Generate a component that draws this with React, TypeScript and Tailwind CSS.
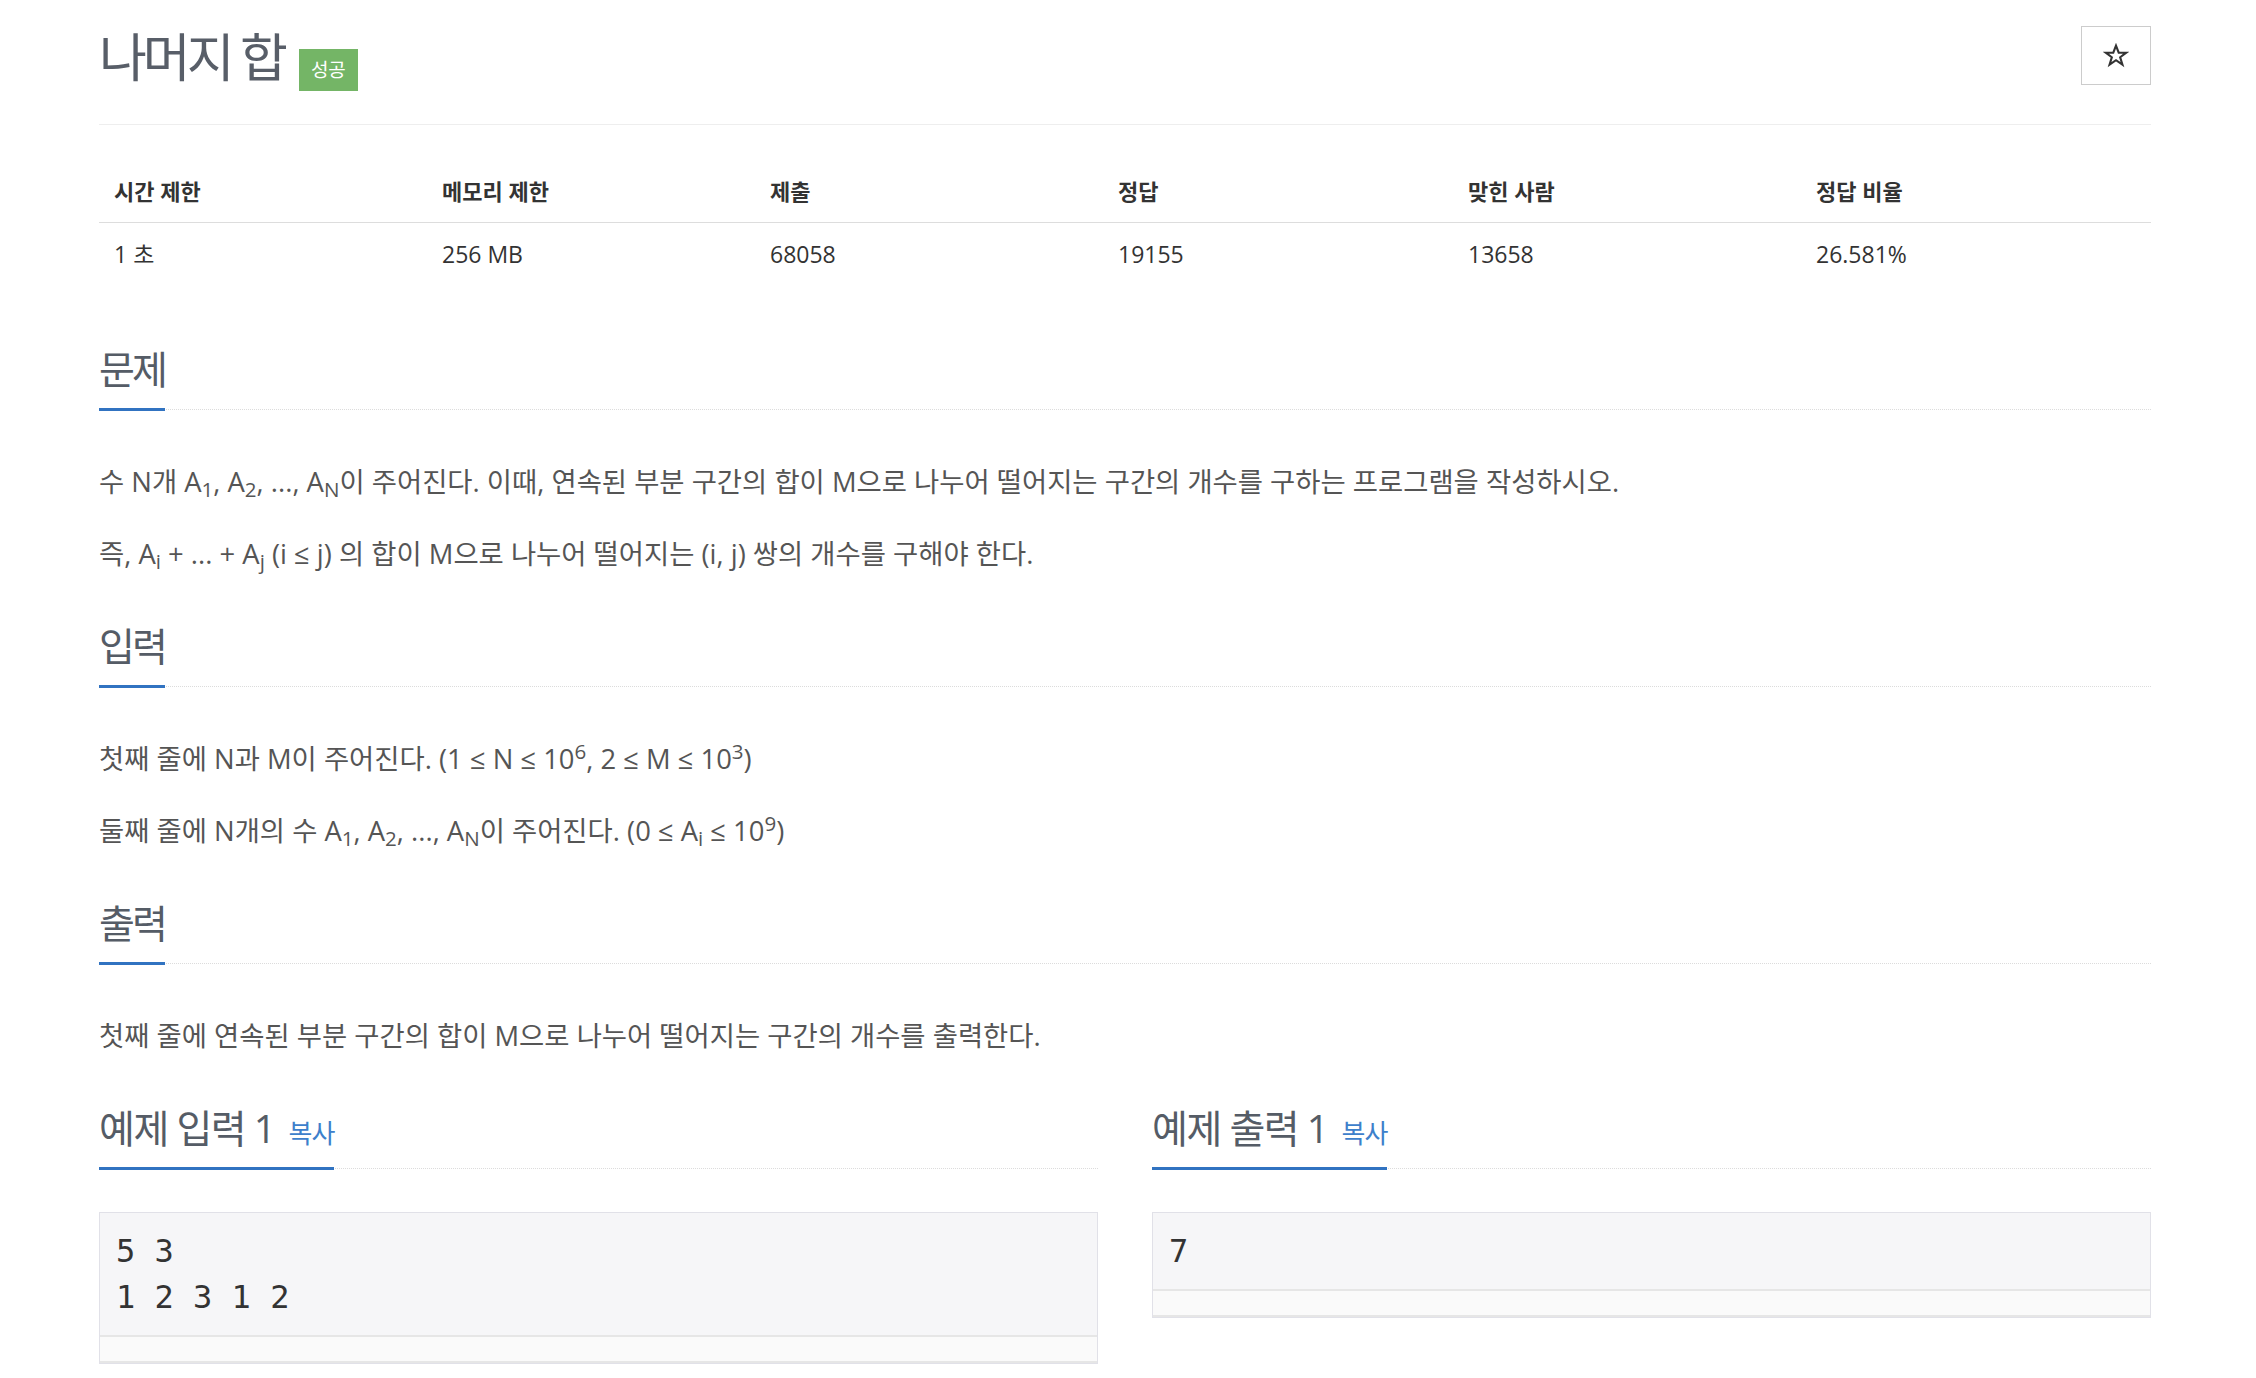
import React from 'react';

const font = "font-['Open_Sans','Noto_Sans_CJK_KR',sans-serif]";

function Headline({ children }: { children: React.ReactNode }) {
  return (
    <div className="border-b border-dotted border-[#dcdcdc]">
      <h2 className="inline-block -mb-[2px] border-b-[3px] border-[#3173c1] pb-[18px] text-[39px] leading-[43px] tracking-[-3px] text-[#555c66]">
        {children}
      </h2>
    </div>
  );
}

function Section({ title, children }: { title: string; children: React.ReactNode }) {
  return (
    <section className="mb-[49px]">
      <Headline>{title}</Headline>
      <div className="mt-[50px] text-[27.4px] leading-[43px] text-[#555]">{children}</div>
    </section>
  );
}

function Sample({ title, data }: { title: string; data: string }) {
  return (
    <div className="min-w-0">
      <div className="border-b border-dotted border-[#dcdcdc]">
        <h2 className="inline-flex -mb-[2px] items-baseline border-b-[3px] border-[#3173c1] pb-[18px] text-[39px] leading-[43px] text-[#555c66]">
          <span className="tracking-[-1.5px]">{title}</span>
          <a className="ml-[14px] text-[26px] leading-none tracking-[-1px] text-[#3d80cb]">복사</a>
        </h2>
      </div>
      <div className="mt-[43px] border border-[#e1e1e8]">
        <pre className="bg-[#f6f6f8] px-[16px] py-[15px] font-['DejaVu_Sans_Mono',monospace] text-[32px] leading-[46px] text-[#333]">
          {data}
        </pre>
        <div className="h-[28px] border-y-2 border-[#e6e6e6] bg-[#fafafa]" />
      </div>
    </div>
  );
}

const stats = [
  ['시간 제한', '1 초'],
  ['메모리 제한', '256 MB'],
  ['제출', '68058'],
  ['정답', '19155'],
  ['맞힌 사람', '13658'],
  ['정답 비율', '26.581%'],
];

export default function App() {
  return (
    <div className={`${font} min-h-[1378px] bg-white pl-[99px] pr-[105px]`}>
      <div className="flex h-[125px] items-start justify-between border-b border-[#eee] pt-[28px]">
        <div className="flex items-start gap-[15px]">
          <h1 className="text-[52px] leading-[57px] tracking-[-4px] text-[#585e68]">나머지 합</h1>
          <span className="mt-[21px] flex h-[42px] w-[59px] items-center justify-center bg-[#74b566] text-[19px] text-white">
            성공
          </span>
        </div>
        <button className="-mt-[2px] flex h-[59px] w-[70px] items-center justify-center border border-[#ccc] bg-white">
          <svg width="26" height="25" viewBox="0 0 24 24" fill="none" stroke="#333" strokeWidth="2" strokeLinejoin="miter">
            <polygon points="12,2.5 14.6,9.3 21.8,9.3 16,13.7 18.2,20.8 12,16.5 5.8,20.8 8,13.7 2.2,9.3 9.4,9.3" />
          </svg>
        </button>
      </div>

      <div className="mt-[36px] mb-[62px] text-[#333]">
        <div className="grid h-[62px] grid-cols-[328px_328px_348px_350px_348px_1fr] items-center border-b border-[#ddd] text-[22px]">
          {stats.map(([h]) => (
            <div key={h} className="px-[15px] font-bold">
              {h}
            </div>
          ))}
        </div>
        <div className="grid h-[62px] grid-cols-[328px_328px_348px_350px_348px_1fr] items-center text-[23px]">
          {stats.map(([h, v]) => (
            <div key={h} className="px-[15px]">
              {v}
            </div>
          ))}
        </div>
      </div>

      <Section title="문제">
        <p className="mb-[29px]">
          수 N개 A<sub>1</sub>, A<sub>2</sub>, ..., A<sub>N</sub>이 주어진다. 이때, 연속된 부분 구간의 합이 M으로 나누어
          떨어지는 구간의 개수를 구하는 프로그램을 작성하시오.
        </p>
        <p className="mb-[29px]">
          즉, A<sub>i</sub> + ... + A<sub>j</sub> (i ≤ j) 의 합이 M으로 나누어 떨어지는 (i, j) 쌍의 개수를 구해야 한다.
        </p>
      </Section>

      <Section title="입력">
        <p className="mb-[29px]">
          첫째 줄에 N과 M이 주어진다. (1 ≤ N ≤ 10<sup>6</sup>, 2 ≤ M ≤ 10<sup>3</sup>)
        </p>
        <p className="mb-[29px]">
          둘째 줄에 N개의 수 A<sub>1</sub>, A<sub>2</sub>, ..., A<sub>N</sub>이 주어진다. (0 ≤ A<sub>i</sub> ≤ 10
          <sup>9</sup>)
        </p>
      </Section>

      <Section title="출력">
        <p className="mb-[29px]">첫째 줄에 연속된 부분 구간의 합이 M으로 나누어 떨어지는 구간의 개수를 출력한다.</p>
      </Section>

      <div className="mt-[3px] grid grid-cols-2 gap-[54px]">
        <Sample title="예제 입력 1" data={'5 3\n1 2 3 1 2'} />
        <Sample title="예제 출력 1" data={'7'} />
      </div>
    </div>
  );
}
